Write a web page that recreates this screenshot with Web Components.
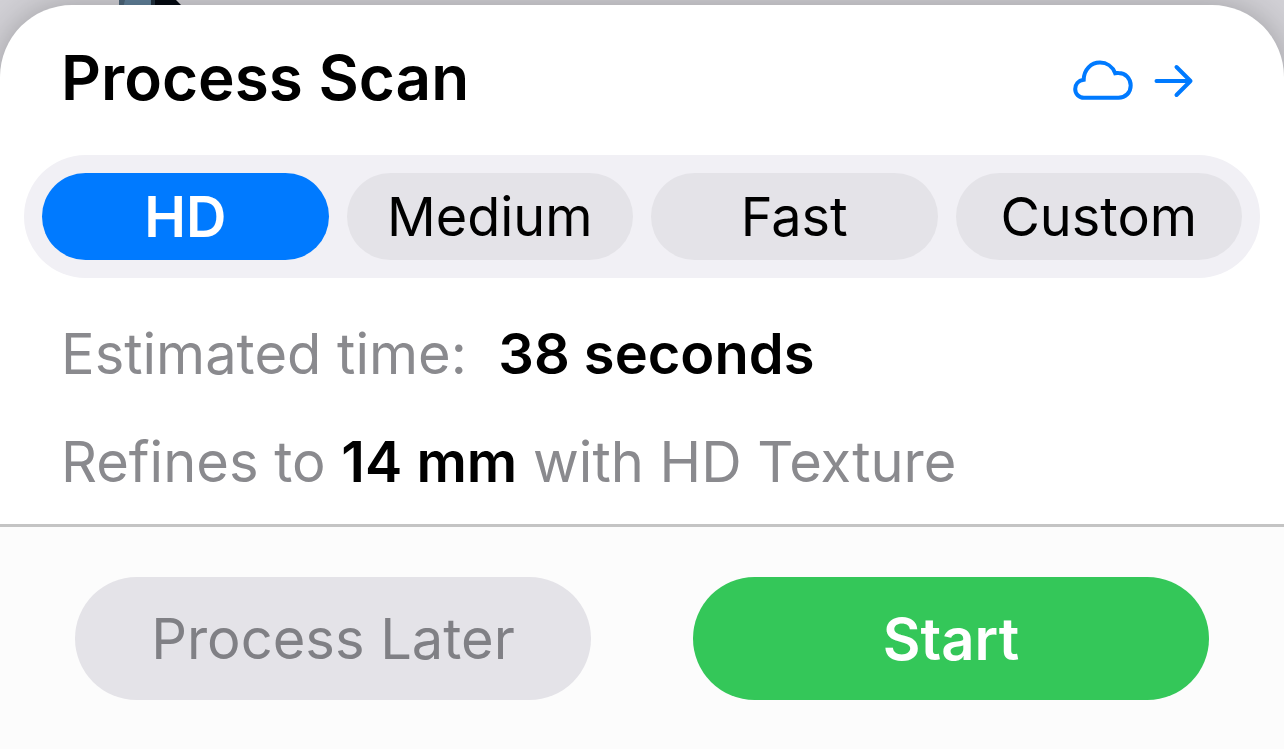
<!DOCTYPE html>
<html lang="en">
<head>
<meta charset="utf-8">
<meta name="viewport" content="width=device-width, initial-scale=1">
<title>Process Scan</title>
<style>
  html { height: 100%; }
  body {
    margin: 0;
    min-height: 100%;
    display: flex;
    font-family: Inter, "Liberation Sans", sans-serif;
    color: #000;
    --blue: #007aff;
    --green: #34c759;
    --fill: #e4e3e8;
    --tray: #f1f0f5;
    --secondary: #8a8a8e;
  }
  scan-stage { flex: 1; }
</style>
</head>
<body>
<scan-stage>
  <process-sheet>
    <sheet-header slot="header">Process Scan</sheet-header>
    <quality-picker>
      <quality-option value="hd" checked>HD</quality-option>
      <quality-option value="medium">Medium</quality-option>
      <quality-option value="fast">Fast</quality-option>
      <quality-option value="custom">Custom</quality-option>
    </quality-picker>
    <scan-details>
      <detail-line>Estimated time:&nbsp; <b>38 seconds</b></detail-line>
      <detail-line>Refines to <b>14 mm</b> with HD Texture</detail-line>
    </scan-details>
    <pill-button slot="footer">Process Later</pill-button>
    <pill-button slot="footer" kind="primary">Start</pill-button>
  </process-sheet>
</scan-stage>

<script>
class ShadowElement extends HTMLElement {
  constructor() {
    super();
    this.attachShadow({ mode: "open" }).innerHTML = this.constructor.markup;
  }
}

/* Camera view that shows behind the sheet */
customElements.define("scan-stage", class extends ShadowElement {
  static markup = `
    <style>
      :host { display: flex; flex-direction: column; position: relative; overflow: hidden; padding-top: 5px; box-sizing: border-box; background: #d1d0d5; }
      .model { position: absolute; top: 0; left: 119px; }
      ::slotted(*) { flex: 1; position: relative; }
    </style>
    <svg class="model" width="62" height="8" viewBox="0 0 62 8" aria-hidden="true">
      <path d="M0 0H33V8H0Z" fill="#5f7f98"/>
      <path d="M0 0H6L4 8H0Z" fill="#4c6578"/>
      <path d="M32 0H57L62 5V8H32Z" fill="#050b12"/>
      <path d="M32 0H36V8H32Z" fill="#22313e"/>
    </svg>
    <slot></slot>`;
});

customElements.define("process-sheet", class extends ShadowElement {
  static markup = `
    <style>
      :host { display: flex; flex-direction: column; background: #fff; border-radius: 72px 72px 0 0; box-shadow: 0 0 32px rgba(0,0,0,.24); }
      main { flex: 1; }
      footer { display: grid; grid-template-columns: 1fr 1fr; gap: 102px; padding: 50px 75px 49px; border-top: 3px solid #c4c4c4; background: #fcfcfc; }
    </style>
    <slot name="header"></slot>
    <main><slot></slot></main>
    <footer><slot name="footer"></slot></footer>`;
});

customElements.define("sheet-header", class extends ShadowElement {
  static markup = `
    <style>
      :host { display: block; }
      header { display: flex; align-items: center; justify-content: space-between; height: 150px; padding: 0 90px 0 61px; box-sizing: border-box; }
      h1 { margin: 0; padding-bottom: 4px; font-size: 62px; line-height: 80px; font-weight: 600; white-space: nowrap; }
      button { display: flex; padding: 0; border: 0; background: none; color: var(--blue); cursor: pointer; }
      svg { display: block; }
    </style>
    <header>
      <h1><slot></slot></h1>
      <button type="button" aria-label="Process in the cloud">
        <svg width="124" height="44" viewBox="0 0 124 44" fill="none" stroke="currentColor" stroke-width="4" stroke-linecap="round">
          <path d="M14 39.800H48.500C55.500 39.800 60.700 34.500 60.700 27.500C60.700 20.300 55.500 15.100 48.500 15.100Q46.800 15 45.200 15.200C42.500 8.300 36.500 4.600 30 4.600C21 4.600 13.900 11.700 13.700 21.800C8 22.700 5.200 26.500 5.200 31C5.200 36 9 39.800 14 39.800Z"/>
          <path d="M86.500 23H120.500M106.500 9L120.500 23L106.500 37" stroke-linejoin="round"/>
        </svg>
      </button>
    </header>`;
});

customElements.define("quality-picker", class extends ShadowElement {
  static markup = `
    <style>
      :host { display: grid; grid-template-columns: repeat(4, 1fr); gap: 18px; margin: 0 24px; padding: 18px; border-radius: 62px; background: var(--tray); }
    </style>
    <slot></slot>`;
  connectedCallback() {
    this.setAttribute("role", "radiogroup");
    this.setAttribute("aria-label", "Quality");
    this.addEventListener("quality-select", (event) => {
      for (const option of this.children) option.toggleAttribute("checked", option === event.target);
    });
  }
});

customElements.define("quality-option", class extends ShadowElement {
  static observedAttributes = ["checked"];
  static markup = `
    <style>
      :host { display: block; min-width: 0; }
      label { display: flex; align-items: center; justify-content: center; position: relative; height: 87px; border-radius: 44px; background: var(--fill); font-size: 54px; line-height: 72px; white-space: nowrap; cursor: pointer; }
      input { position: absolute; inset: 0; width: 100%; height: 100%; margin: 0; appearance: none; border-radius: 44px; cursor: pointer; }
      :host([checked]) label { background: var(--blue); color: #fff; font-size: 56px; font-weight: 600; }
    </style>
    <label><input type="radio" name="quality"><span><slot></slot></span></label>`;
  connectedCallback() {
    const input = this.shadowRoot.querySelector("input");
    input.value = this.getAttribute("value");
    input.addEventListener("change", () => this.dispatchEvent(new CustomEvent("quality-select", { bubbles: true })));
  }
  attributeChangedCallback() {
    this.shadowRoot.querySelector("input").checked = this.hasAttribute("checked");
  }
});

customElements.define("scan-details", class extends ShadowElement {
  static markup = `
    <style>
      :host { display: block; padding: 22px 61px 8px; }
    </style>
    <slot></slot>`;
});

customElements.define("detail-line", class extends ShadowElement {
  static markup = `
    <style>
      :host { display: block; font-size: 56px; line-height: 108px; color: var(--secondary); white-space: nowrap; }
      p { margin: 0; }
      ::slotted(b) { color: #000; font-weight: 600; }
    </style>
    <p><slot></slot></p>`;
});

customElements.define("pill-button", class extends ShadowElement {
  static markup = `
    <style>
      :host { display: block; min-width: 0; }
      button { display: block; width: 100%; height: 123px; padding: 0; border: 0; border-radius: 62px; background: var(--fill); color: #808085; font: 400 56px/72px Inter, "Liberation Sans", sans-serif; white-space: nowrap; cursor: pointer; }
      :host([kind="primary"]) button { background: var(--green); color: #fff; font-size: 58px; font-weight: 600; }
    </style>
    <button type="button"><slot></slot></button>`;
});
</script>
</body>
</html>
